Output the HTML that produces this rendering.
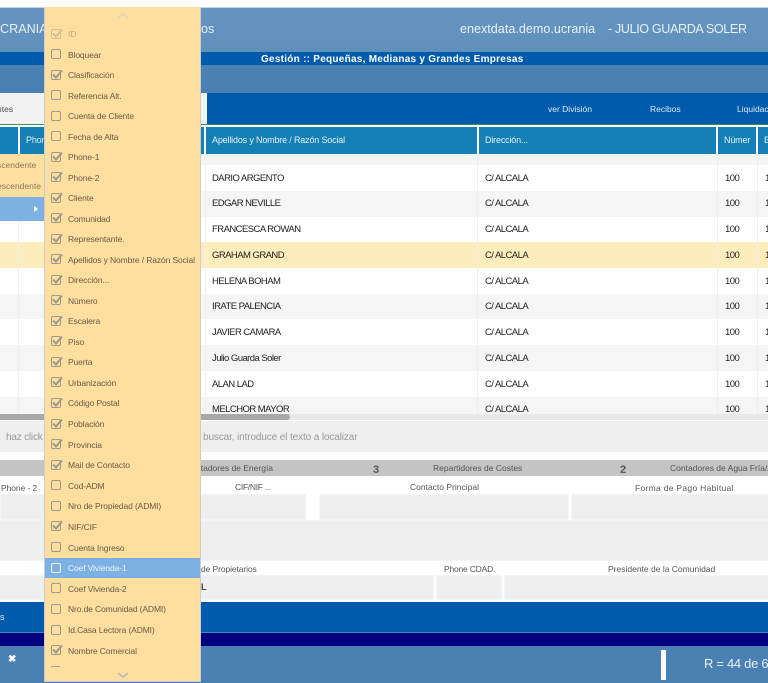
<!DOCTYPE html>
<html><head><meta charset="utf-8"><style>
html,body{margin:0;padding:0;background:#fff}
#p{position:relative;width:768px;height:683px;overflow:hidden;font-family:"Liberation Sans",sans-serif;color:#333;background:#fff}
#p div{position:absolute;white-space:nowrap}
.h{background:#1580b6;top:127px;height:27px;color:#e4f0f6;font-size:9px;line-height:27px;letter-spacing:-.17px}
.c{font-size:9.5px;color:#222;line-height:12px;letter-spacing:-.55px;margin-top:0}
.l{font-size:8.5px;color:#555;line-height:12px}
.i{background:#efefef;border:1px solid #eef5fb;box-sizing:border-box;border-radius:2px}
.m{left:45px;width:155px;height:20.5px}
.m span{position:absolute;left:23px;top:4.5px;font-size:8.5px;letter-spacing:-.12px;color:#6b5a45;line-height:12px;white-space:nowrap}
.m svg{position:absolute;left:5px;top:3px}
.m rect{stroke:#9c9a8c}
.m path{stroke:#9c9a8c}
</style></head><body><div id="p">
<div style="left:0;top:7px;width:768px;height:45px;background:linear-gradient(#6594bf,#5f90bb);border-top:1px solid #c9d3dc;box-sizing:border-box"></div>
<div style="left:0;top:22px;font-size:12.6px;color:#e8f0f6">CRANIA</div>
<div style="left:201px;top:22px;font-size:12.6px;color:#e8f0f6">os</div>
<div style="left:460px;top:22px;font-size:12.6px;color:#e8f0f6">enextdata.demo.ucrania</div>
<div style="left:608px;top:22px;font-size:12.6px;letter-spacing:-.38px;color:#e8f0f6">- JULIO GUARDA SOLER</div>
<div style="left:0;top:52px;width:768px;height:13px;background:#005bac"></div>
<div style="left:261px;top:54px;font-size:10px;font-weight:bold;color:#fff;letter-spacing:.26px">Gestión :: Pequeñas, Medianas y Grandes Empresas</div>
<div style="left:0;top:65px;width:768px;height:28px;background:#4a80b3"></div>
<div style="left:0;top:93px;width:768px;height:31px;background:#005bac"></div>
<div style="left:0;top:93px;width:207px;height:31px;background:#f2f2f2"></div>
<div style="left:-3px;top:104px;font-size:8.5px;color:#555">ntes</div>
<div style="left:548px;top:104px;font-size:8.5px;color:#dce8f2">ver División</div>
<div style="left:650px;top:104px;font-size:8.5px;color:#dce8f2">Recibos</div>
<div style="left:737px;top:104px;font-size:8.5px;color:#dce8f2">Liquidaciones</div>
<div style="left:0;top:124px;width:768px;height:1px;background:#3c8f5a"></div>

<div class="h" style="left:0;width:18px"></div>
<div class="h" style="left:20px;width:184px;padding-left:6px;box-sizing:border-box">Phone</div>
<div class="h" style="left:206px;width:271px;padding-left:6px;box-sizing:border-box">Apellidos y Nombre / Razón Social</div>
<div class="h" style="left:479px;width:237px;padding-left:6px;box-sizing:border-box">Dirección...</div>
<div class="h" style="left:718px;width:38px;padding-left:6px;box-sizing:border-box">Númer</div>
<div class="h" style="left:758px;width:10px;padding-left:6px;box-sizing:border-box">E</div>

<div style="left:0;top:154px;width:768px;height:11px;background:#f5f5f5"></div>
<div style="left:0;top:191px;width:768px;height:26px;background:#f5f5f5"></div>
<div style="left:0;top:242px;width:768px;height:26px;background:#feedbc"></div>
<div style="left:0;top:294px;width:768px;height:25px;background:#f5f5f5"></div>
<div style="left:0;top:345px;width:768px;height:26px;background:#f5f5f5"></div>
<div style="left:0;top:397px;width:768px;height:17px;background:#f5f5f5"></div>
<div style="left:18px;top:221px;width:1px;height:193px;background:#efefef"></div>
<div style="left:205px;top:154px;width:1px;height:260px;background:#efefef"></div>
<div style="left:477px;top:154px;width:1px;height:260px;background:#efefef"></div>
<div style="left:717px;top:154px;width:1px;height:260px;background:#efefef"></div>
<div style="left:757px;top:154px;width:1px;height:260px;background:#efefef"></div>
<div style="left:0;top:197px;width:45px;height:24px;background:#7db1e3"></div>
<div style="left:34px;top:206px;width:0;height:0;border-left:4px solid #fff;border-top:3.5px solid transparent;border-bottom:3.5px solid transparent"></div>

<div class="c" style="left:212px;top:173px">DARIO ARGENTO</div>
<div class="c" style="left:212px;top:198px">EDGAR NEVILLE</div>
<div class="c" style="left:212px;top:224px">FRANCESCA ROWAN</div>
<div class="c" style="left:212px;top:250px">GRAHAM GRAND</div>
<div class="c" style="left:212px;top:276px">HELENA BOHAM</div>
<div class="c" style="left:212px;top:301px">IRATE PALENCIA</div>
<div class="c" style="left:212px;top:327px">JAVIER CAMARA</div>
<div class="c" style="left:212px;top:353px">Julio Guarda Soler</div>
<div class="c" style="left:212px;top:379px">ALAN LAD</div>
<div class="c" style="left:212px;top:404px">MELCHOR MAYOR</div>

<div class="c" style="left:485px;top:173px">C/ ALCALA</div><div class="c" style="left:725px;top:173px">100</div><div class="c" style="left:765px;top:173px">1</div>
<div class="c" style="left:485px;top:198px">C/ ALCALA</div><div class="c" style="left:725px;top:198px">100</div><div class="c" style="left:765px;top:198px">1</div>
<div class="c" style="left:485px;top:224px">C/ ALCALA</div><div class="c" style="left:725px;top:224px">100</div><div class="c" style="left:765px;top:224px">1</div>
<div class="c" style="left:485px;top:250px">C/ ALCALA</div><div class="c" style="left:725px;top:250px">100</div><div class="c" style="left:765px;top:250px">1</div>
<div class="c" style="left:485px;top:276px">C/ ALCALA</div><div class="c" style="left:725px;top:276px">100</div><div class="c" style="left:765px;top:276px">1</div>
<div class="c" style="left:485px;top:301px">C/ ALCALA</div><div class="c" style="left:725px;top:301px">100</div><div class="c" style="left:765px;top:301px">1</div>
<div class="c" style="left:485px;top:327px">C/ ALCALA</div><div class="c" style="left:725px;top:327px">100</div><div class="c" style="left:765px;top:327px">1</div>
<div class="c" style="left:485px;top:353px">C/ ALCALA</div><div class="c" style="left:725px;top:353px">100</div><div class="c" style="left:765px;top:353px">1</div>
<div class="c" style="left:485px;top:379px">C/ ALCALA</div><div class="c" style="left:725px;top:379px">100</div><div class="c" style="left:765px;top:379px">1</div>
<div class="c" style="left:485px;top:404px">C/ ALCALA</div><div class="c" style="left:725px;top:404px">100</div><div class="c" style="left:765px;top:404px">1</div>

<div style="left:0;top:414px;width:768px;height:6px;background:#e8e8e8"></div>
<div style="left:0;top:414px;width:290px;height:6px;background:#a8a8a8;border-radius:0 3px 3px 0"></div>
<div style="left:0;top:421px;width:768px;height:31px;background:#efefef"></div>
<div style="left:6px;top:431px;font-size:10px;letter-spacing:-.2px;color:#999;line-height:12px;margin-top:1px">haz click</div>
<div style="left:203px;top:431px;font-size:10px;letter-spacing:-.12px;color:#999;line-height:12px;margin-top:1px">buscar, introduce el texto a localizar</div>

<div style="left:0;top:460px;width:768px;height:16px;background:#c4c4c4"></div>
<div class="l" style="left:196px;top:462px">ntadores de Energía</div>
<div style="left:373px;top:464px;font-size:11px;font-weight:bold;color:#555">3</div>
<div class="l" style="left:433px;top:462px">Repartidores de Costes</div>
<div style="left:620px;top:464px;font-size:11px;font-weight:bold;color:#555">2</div>
<div class="l" style="left:670px;top:462px">Contadores de Agua Fría/ACS</div>

<div class="l" style="left:1px;top:482px;letter-spacing:-.1px">Phone - 2</div>
<div class="l" style="left:235px;top:481px;letter-spacing:-.3px">CIF/NIF ...</div>
<div class="l" style="left:410px;top:481px">Contacto Principal</div>
<div class="l" style="left:635px;top:482px;letter-spacing:.3px">Forma de Pago Habitual</div>
<div class="i" style="left:0;top:494px;width:306px;height:26px"></div>
<div class="i" style="left:319px;top:494px;width:250px;height:26px"></div>
<div class="i" style="left:571px;top:494px;width:200px;height:26px"></div>
<div class="i" style="left:-2px;top:520px;width:772px;height:41px"></div>
<div class="l" style="left:201px;top:563px;letter-spacing:-.1px">de Propietarios</div>
<div class="l" style="left:444px;top:563px;letter-spacing:-.2px">Phone CDAD.</div>
<div class="l" style="left:608px;top:563px">Presidente de la Comunidad</div>
<div class="i" style="left:-2px;top:575px;width:436px;height:25px"></div>
<div class="i" style="left:436px;top:575px;width:66px;height:25px"></div>
<div class="i" style="left:504px;top:575px;width:266px;height:25px"></div>
<div style="left:201px;top:582px;font-size:9px;font-weight:bold;color:#444">L</div>

<div style="left:0;top:602px;width:768px;height:31px;background:#005bac"></div>
<div style="left:0;top:612px;font-size:9px;color:#dce8f2">s</div>
<div style="left:0;top:632px;width:768px;height:1px;background:#3d86bd"></div>
<div style="left:0;top:633px;width:768px;height:13px;background:#000080"></div>
<div style="left:0;top:646px;width:768px;height:37px;background:#4a80b3"></div>
<div style="left:8px;top:654px;font-size:10px;font-weight:bold;color:#fff">✖</div>
<div style="left:661px;top:650px;width:5px;height:30px;background:#fff"></div>
<div style="left:704px;top:656px;font-size:13px;color:#e8f0f6;letter-spacing:-.3px">R = 44 de 62</div>

<div style="left:0;top:154px;width:45px;height:43px;background:#fedfa0"></div>
<div style="left:-3px;top:160px;font-size:8.5px;color:#8a7a60">scendente</div>
<div style="left:-3px;top:181px;font-size:8.5px;color:#8a7a60">escendente</div>

<div style="left:44px;top:7px;width:157px;height:675px;background:#fedfa0;border-left:1px solid #c9cdd2;border-right:1px solid #c9cdd2;border-bottom:1px solid #c9cdd2;box-sizing:border-box"></div>
<svg style="position:absolute;left:117px;top:12px" width="12" height="8"><path d="M1 6L6 2L11 6" fill="none" stroke="#e8d8b4" stroke-width="2"/></svg>
<svg style="position:absolute;left:117px;top:671px" width="12" height="8"><path d="M1 2L6 6L11 2" fill="none" stroke="#c4bcae" stroke-width="2"/></svg>
<div style="left:45px;top:558px;width:155px;height:20px;background:#7db1e3"></div>
<div class="m" style="top:23.5px"><svg width="14" height="14" opacity=".45"><rect x="1.5" y="2.5" width="9" height="9" rx="1.5" fill="none" stroke="#8a8a80"/><path d="M3 6.5L6 9.5L12 2.5" fill="none" stroke="#8a8a80" stroke-width="2"/></svg><span style="opacity:.4">ID</span></div>
<div class="m" style="top:44px"><svg width="14" height="14"><rect x="1.5" y="2.5" width="9" height="9" rx="1.5" fill="none" stroke="#8a8a80"/></svg><span>Bloquear</span></div>
<div class="m" style="top:64.5px"><svg width="14" height="14"><rect x="1.5" y="2.5" width="9" height="9" rx="1.5" fill="none" stroke="#8a8a80"/><path d="M3 6.5L6 9.5L12 2.5" fill="none" stroke="#8a8a80" stroke-width="2"/></svg><span>Clasificación</span></div>
<div class="m" style="top:85px"><svg width="14" height="14"><rect x="1.5" y="2.5" width="9" height="9" rx="1.5" fill="none" stroke="#8a8a80"/></svg><span>Referencia Alt.</span></div>
<div class="m" style="top:105.5px"><svg width="14" height="14"><rect x="1.5" y="2.5" width="9" height="9" rx="1.5" fill="none" stroke="#8a8a80"/></svg><span>Cuenta de Cliente</span></div>
<div class="m" style="top:126px"><svg width="14" height="14"><rect x="1.5" y="2.5" width="9" height="9" rx="1.5" fill="none" stroke="#8a8a80"/></svg><span>Fecha de Alta</span></div>
<div class="m" style="top:146.5px"><svg width="14" height="14"><rect x="1.5" y="2.5" width="9" height="9" rx="1.5" fill="none" stroke="#8a8a80"/><path d="M3 6.5L6 9.5L12 2.5" fill="none" stroke="#8a8a80" stroke-width="2"/></svg><span>Phone-1</span></div>
<div class="m" style="top:167px"><svg width="14" height="14"><rect x="1.5" y="2.5" width="9" height="9" rx="1.5" fill="none" stroke="#8a8a80"/><path d="M3 6.5L6 9.5L12 2.5" fill="none" stroke="#8a8a80" stroke-width="2"/></svg><span>Phone-2</span></div>
<div class="m" style="top:187.5px"><svg width="14" height="14"><rect x="1.5" y="2.5" width="9" height="9" rx="1.5" fill="none" stroke="#8a8a80"/><path d="M3 6.5L6 9.5L12 2.5" fill="none" stroke="#8a8a80" stroke-width="2"/></svg><span>Cliente</span></div>
<div class="m" style="top:208px"><svg width="14" height="14"><rect x="1.5" y="2.5" width="9" height="9" rx="1.5" fill="none" stroke="#8a8a80"/><path d="M3 6.5L6 9.5L12 2.5" fill="none" stroke="#8a8a80" stroke-width="2"/></svg><span>Comunidad</span></div>
<div class="m" style="top:228.5px"><svg width="14" height="14"><rect x="1.5" y="2.5" width="9" height="9" rx="1.5" fill="none" stroke="#8a8a80"/><path d="M3 6.5L6 9.5L12 2.5" fill="none" stroke="#8a8a80" stroke-width="2"/></svg><span>Representante.</span></div>
<div class="m" style="top:249px"><svg width="14" height="14"><rect x="1.5" y="2.5" width="9" height="9" rx="1.5" fill="none" stroke="#8a8a80"/><path d="M3 6.5L6 9.5L12 2.5" fill="none" stroke="#8a8a80" stroke-width="2"/></svg><span>Apellidos y Nombre / Razón Social</span></div>
<div class="m" style="top:269.5px"><svg width="14" height="14"><rect x="1.5" y="2.5" width="9" height="9" rx="1.5" fill="none" stroke="#8a8a80"/><path d="M3 6.5L6 9.5L12 2.5" fill="none" stroke="#8a8a80" stroke-width="2"/></svg><span>Dirección...</span></div>
<div class="m" style="top:290px"><svg width="14" height="14"><rect x="1.5" y="2.5" width="9" height="9" rx="1.5" fill="none" stroke="#8a8a80"/><path d="M3 6.5L6 9.5L12 2.5" fill="none" stroke="#8a8a80" stroke-width="2"/></svg><span>Número</span></div>
<div class="m" style="top:310.5px"><svg width="14" height="14"><rect x="1.5" y="2.5" width="9" height="9" rx="1.5" fill="none" stroke="#8a8a80"/><path d="M3 6.5L6 9.5L12 2.5" fill="none" stroke="#8a8a80" stroke-width="2"/></svg><span>Escalera</span></div>
<div class="m" style="top:331px"><svg width="14" height="14"><rect x="1.5" y="2.5" width="9" height="9" rx="1.5" fill="none" stroke="#8a8a80"/><path d="M3 6.5L6 9.5L12 2.5" fill="none" stroke="#8a8a80" stroke-width="2"/></svg><span>Piso</span></div>
<div class="m" style="top:351.5px"><svg width="14" height="14"><rect x="1.5" y="2.5" width="9" height="9" rx="1.5" fill="none" stroke="#8a8a80"/><path d="M3 6.5L6 9.5L12 2.5" fill="none" stroke="#8a8a80" stroke-width="2"/></svg><span>Puerta</span></div>
<div class="m" style="top:372px"><svg width="14" height="14"><rect x="1.5" y="2.5" width="9" height="9" rx="1.5" fill="none" stroke="#8a8a80"/><path d="M3 6.5L6 9.5L12 2.5" fill="none" stroke="#8a8a80" stroke-width="2"/></svg><span>Urbanización</span></div>
<div class="m" style="top:392.5px"><svg width="14" height="14"><rect x="1.5" y="2.5" width="9" height="9" rx="1.5" fill="none" stroke="#8a8a80"/><path d="M3 6.5L6 9.5L12 2.5" fill="none" stroke="#8a8a80" stroke-width="2"/></svg><span>Código Postal</span></div>
<div class="m" style="top:413.5px"><svg width="14" height="14"><rect x="1.5" y="2.5" width="9" height="9" rx="1.5" fill="none" stroke="#8a8a80"/><path d="M3 6.5L6 9.5L12 2.5" fill="none" stroke="#8a8a80" stroke-width="2"/></svg><span>Población</span></div>
<div class="m" style="top:434px"><svg width="14" height="14"><rect x="1.5" y="2.5" width="9" height="9" rx="1.5" fill="none" stroke="#8a8a80"/><path d="M3 6.5L6 9.5L12 2.5" fill="none" stroke="#8a8a80" stroke-width="2"/></svg><span>Provincia</span></div>
<div class="m" style="top:454.5px"><svg width="14" height="14"><rect x="1.5" y="2.5" width="9" height="9" rx="1.5" fill="none" stroke="#8a8a80"/><path d="M3 6.5L6 9.5L12 2.5" fill="none" stroke="#8a8a80" stroke-width="2"/></svg><span>Mail de Contacto</span></div>
<div class="m" style="top:475px"><svg width="14" height="14"><rect x="1.5" y="2.5" width="9" height="9" rx="1.5" fill="none" stroke="#8a8a80"/></svg><span>Cod-ADM</span></div>
<div class="m" style="top:495.5px"><svg width="14" height="14"><rect x="1.5" y="2.5" width="9" height="9" rx="1.5" fill="none" stroke="#8a8a80"/></svg><span>Nro de Propiedad (ADMI)</span></div>
<div class="m" style="top:516px"><svg width="14" height="14"><rect x="1.5" y="2.5" width="9" height="9" rx="1.5" fill="none" stroke="#8a8a80"/><path d="M3 6.5L6 9.5L12 2.5" fill="none" stroke="#8a8a80" stroke-width="2"/></svg><span>NIF/CIF</span></div>
<div class="m" style="top:537px"><svg width="14" height="14"><rect x="1.5" y="2.5" width="9" height="9" rx="1.5" fill="none" stroke="#8a8a80"/></svg><span>Cuenta Ingreso</span></div>
<div class="m" style="top:557.5px"><svg width="14" height="14"><rect x="1.5" y="2.5" width="9" height="9" rx="1.5" fill="none" style="stroke:#eef5fb"/></svg><span style="color:#eef5fb">Coef Vivienda-1</span></div>
<div class="m" style="top:578px"><svg width="14" height="14"><rect x="1.5" y="2.5" width="9" height="9" rx="1.5" fill="none" stroke="#8a8a80"/></svg><span>Coef Vivienda-2</span></div>
<div class="m" style="top:598.5px"><svg width="14" height="14"><rect x="1.5" y="2.5" width="9" height="9" rx="1.5" fill="none" stroke="#8a8a80"/></svg><span>Nro.de Comunidad (ADMI)</span></div>
<div class="m" style="top:619.5px"><svg width="14" height="14"><rect x="1.5" y="2.5" width="9" height="9" rx="1.5" fill="none" stroke="#8a8a80"/></svg><span>Id.Casa Lectora (ADMI)</span></div>
<div class="m" style="top:640px"><svg width="14" height="14"><rect x="1.5" y="2.5" width="9" height="9" rx="1.5" fill="none" stroke="#8a8a80"/><path d="M3 6.5L6 9.5L12 2.5" fill="none" stroke="#8a8a80" stroke-width="2"/></svg><span>Nombre Comercial</span></div>
<div style="left:51px;top:666px;width:9px;height:1px;background:#a8a08c"></div>
</div></body></html>
